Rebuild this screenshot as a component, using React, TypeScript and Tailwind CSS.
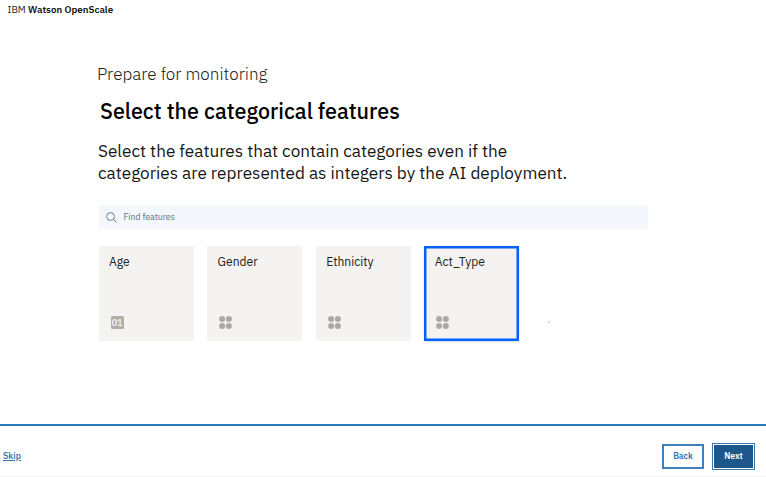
type Feature = { name: string; kind: 'number' | 'category'; selected?: boolean };

const features: Feature[] = [
  { name: 'Age', kind: 'number' },
  { name: 'Gender', kind: 'category' },
  { name: 'Ethnicity', kind: 'category' },
  { name: 'Act_Type', kind: 'category', selected: true },
];

function CategoryIcon() {
  return (
    <svg width="13" height="13" viewBox="0 0 13 13" fill="#ada8a2">
      <circle cx="3.1" cy="3.1" r="3" />
      <circle cx="9.9" cy="3.1" r="3" />
      <circle cx="3.1" cy="9.9" r="3" />
      <circle cx="9.9" cy="9.9" r="3" />
    </svg>
  );
}

function NumberIcon() {
  return (
    <div className="flex h-[13px] w-[13px] items-center justify-center rounded-[1.5px] bg-[#b1aea8] pb-px text-[9px] leading-none font-semibold text-[#f3f2f0]">
      01
    </div>
  );
}

function Card({ feature }: { feature: Feature }) {
  return (
    <div
      className={`flex h-[95px] w-[95px] flex-col justify-between bg-[#f4f3f2] pt-2 pb-[12px] pl-[10.5px] ${
        feature.selected ? 'shadow-[inset_0_0_0_2.5px_#0062ff,0_1px_2px_rgba(0,0,0,0.15)]' : ''
      }`}
    >
      <div className="text-[12.1px] leading-[16px] text-[#202020]">{feature.name}</div>
      <div className="pl-[1.6px]">{feature.kind === 'number' ? <NumberIcon /> : <CategoryIcon />}</div>
    </div>
  );
}

export default function App() {
  return (
    <div className="flex h-[477px] w-[766px] flex-col overflow-hidden bg-white font-['IBM_Plex_Sans','Noto_Sans',sans-serif] whitespace-nowrap">
      <header className="h-[62px] pt-[3px] pl-[7.5px] text-[9.75px] leading-[14px] text-[#222]">
        IBM <span className="font-semibold text-[#111]">Watson OpenScale</span>
      </header>
      <main className="flex h-[362px] flex-col pl-[98px]">
        <p className="-ml-px h-[24px] text-[17.1px] leading-[24px] font-light text-[#202020]">Prepare for monitoring</p>
        <h1 className="mt-[10px] h-[30px] pl-[2px] text-[21.5px] leading-[30px] font-medium text-black">
          Select the categorical features
        </h1>
        <div className="mt-[14px] h-[44px] text-[17.15px] leading-[22px] text-[#161616]">
          <p>Select the features that contain categories even if the</p>
          <p>categories are represented as integers by the AI deployment.</p>
        </div>
        <div className="mt-[21px] ml-px flex h-[24px] w-[549px] items-center bg-[#f4f7fb] pl-[7px]">
          <svg width="11" height="11" viewBox="0 0 11 11" fill="none" stroke="#6f7d83" strokeWidth="1">
            <circle cx="4.5" cy="4.5" r="3.9" />
            <path d="M7.4 7.4 10.4 10.4" />
          </svg>
          <span className="pl-[6.5px] text-[8.7px] leading-3 text-[#66727a]">Find features</span>
        </div>
        <div className="mt-[17px] ml-[0.5px] flex gap-[13.6px]">
          {features.map((f) => (
            <Card key={f.name} feature={f} />
          ))}
          <div className="mt-[75px] ml-[15px] h-[2px] w-[2px] rounded-full bg-[#c5c5c5]" />
        </div>
      </main>
      <footer className="flex h-[53px] items-start justify-between border-t-2 border-b border-t-[#2a78b8] border-b-[#f2f2f2] pt-[17px] pr-[11px] pl-[3px] text-[8.5px]">
        <a className="mt-[7px] text-[8.8px] leading-3 font-semibold text-[#3d77b0] underline">Skip</a>
        <div className="flex gap-[8px]">
          <button className="mt-px flex h-[25px] w-[42px] items-center justify-center border-2 border-[#3b80ba] bg-white font-semibold text-[#2c74b3]">
            Back
          </button>
          <button className="h-[27px] w-[43px] border border-[#3b76a8] p-px">
            <span className="flex h-full items-center justify-center bg-[#1d588b] font-semibold text-white">Next</span>
          </button>
        </div>
      </footer>
    </div>
  );
}
